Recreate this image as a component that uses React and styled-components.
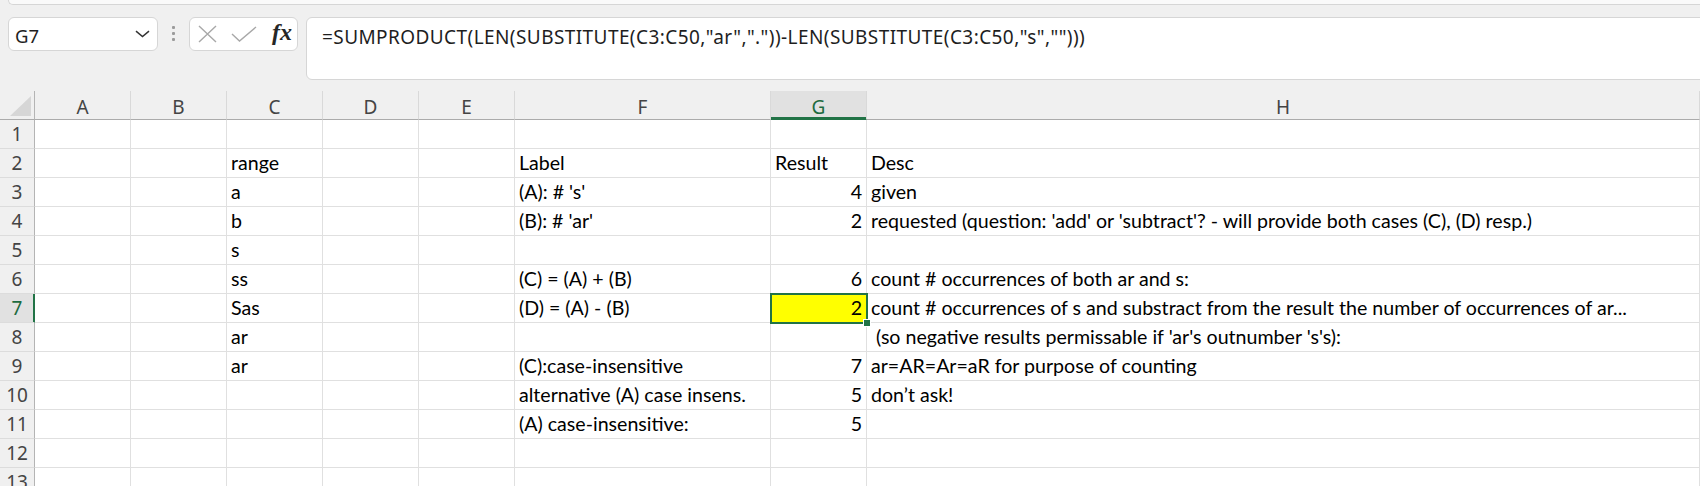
import React from 'react';
import styled, { createGlobalStyle, css } from 'styled-components';

const GlobalStyle = createGlobalStyle`
  html, body {
    margin: 0;
    padding: 0;
    background: #f0f0f0;
    overflow: hidden;
  }
`;

const Page = styled.div`
  width: 1700px;
  height: 486px;
  overflow: hidden;
  background: #f0f0f0;
`;

const TopStrip = styled.div`
  height: 4px;
  margin-left: 8px;
  background: #fafafa;
  border-left: 1px solid #d6d6d6;
  border-bottom: 1px solid #d6d6d6;
  border-bottom-left-radius: 6px;
`;

const FormulaRow = styled.div`
  display: flex;
  align-items: flex-start;
  height: 63px;
  padding: 12px 0 11px 8px;
  font-family: 'Noto Sans', 'Open Sans', sans-serif;
`;

const Box = styled.div`
  box-sizing: border-box;
  flex-shrink: 0;
  height: 34px;
  background: #fff;
  border: 1px solid #d6d6d6;
  border-radius: 6px;
  display: flex;
  align-items: center;
`;

const NameBox = styled(Box)`
  width: 150px;
  padding: 3px 7px 0 6px;
  justify-content: space-between;
  font-size: 18.5px;
  color: #1e1e1e;

  svg {
    margin-top: -3px;
  }
`;

const Dots = styled.div`
  display: flex;
  flex-direction: column;
  gap: 3px;
  margin: 9px 14px 0 14px;

  span {
    width: 3px;
    height: 3px;
    border-radius: 1px;
    background: #9b9b9b;
  }
`;

const FxBox = styled(Box)`
  width: 109px;
  padding: 0 5px 0 7px;
  gap: 0;

  svg + svg {
    margin-left: 13px;
  }
`;

const Fx = styled.span`
  margin-left: auto;
  margin-top: -3px;
  font-family: 'Liberation Serif', 'DejaVu Serif', serif;
  font-style: italic;
  font-weight: bold;
  font-size: 24px;
  color: #262626;
`;

const FormulaBar = styled.div`
  box-sizing: border-box;
  flex: 1;
  height: 63px;
  margin: 0 -12px 0 8px;
  padding: 7px 15px 0;
  background: #fff;
  border: 1px solid #d6d6d6;
  border-radius: 6px;
  font-size: 19px;
  letter-spacing: 0.42px;
  line-height: 24px;
  color: #1e1e1e;
  white-space: pre;
`;

const Grid = styled.div`
  display: grid;
  grid-template-columns: 35px 96px 96px 96px 96px 96px 256px 96px 833px;
  grid-auto-rows: 29px;
`;

const HeadBase = css`
  box-sizing: border-box;
  font-family: 'Noto Sans', 'Open Sans', sans-serif;
  font-size: 19px;
  text-align: center;
  color: ${(p) => (p.$active ? '#1d6b40' : '#444')};
  background: ${(p) => (p.$active ? '#e1e1e1' : '#f0f0f0')};
`;

const Corner = styled.div`
  box-sizing: border-box;
  background: #f0f0f0;
  border-right: 1px solid #b4b4b4;
  border-bottom: 1px solid #ababab;
  display: flex;
  align-items: flex-end;
  justify-content: flex-end;
  padding: 0 3px 3px 0;
`;

const ColHead = styled.div`
  ${HeadBase}
  line-height: 26px;
  padding-top: 3px;
  border-right: 1px solid #d9d9d9;
  border-bottom: 1px solid #ababab;
  ${(p) => p.$active && css`
    box-shadow: inset 0 -2px 0 #217346;
    border-bottom-color: #217346;
  `}
`;

const RowHead = styled.div`
  ${HeadBase}
  line-height: 27px;
  padding-top: 1px;
  border-right: 1px solid #b4b4b4;
  border-bottom: 1px solid #dcdcdc;
  ${(p) => p.$active && css`
    box-shadow: inset -1px 0 0 #217346;
    border-right-color: #217346;
  `}
`;

const Cell = styled.div`
  box-sizing: border-box;
  position: relative;
  padding: 0 4px;
  background: ${(p) => p.$fill || '#fff'};
  border-right: 1px solid #e0e0e0;
  border-bottom: 1px solid #e0e0e0;
  font-family: Lato, 'Open Sans', sans-serif;
  font-size: 19.6px;
  line-height: 28px;
  color: #000;
  white-space: pre;
  overflow: ${(p) => (p.$selected ? 'visible' : 'hidden')};
  text-align: ${(p) => p.$align || 'left'};
  ${(p) => p.$selected && css`
    z-index: 1;
    outline: 2px solid #217346;
    outline-offset: -1px;
  `}
`;

const FillHandle = styled.span`
  position: absolute;
  right: -5px;
  bottom: -5px;
  width: 6px;
  height: 6px;
  background: #217346;
  border: 1px solid #fff;
`;

const columns = ['A', 'B', 'C', 'D', 'E', 'F', 'G', 'H'];

const data = {
  2: { C: 'range', F: 'Label', G: 'Result', H: 'Desc' },
  3: { C: 'a', F: "(A): # 's'", G: 4, H: 'given' },
  4: {
    C: 'b',
    F: "(B): # 'ar'",
    G: 2,
    H: "requested (question: 'add' or 'subtract'? - will provide both cases (C), (D) resp.)",
  },
  5: { C: 's' },
  6: { C: 'ss', F: '(C) = (A) + (B)', G: 6, H: 'count # occurrences of both ar and s:' },
  7: {
    C: 'Sas',
    F: '(D) = (A) - (B)',
    G: 2,
    H: 'count # occurrences of s and substract from the result the number of occurrences of ar...',
  },
  8: { C: 'ar', H: " (so negative results permissable if 'ar's outnumber 's's):" },
  9: { C: 'ar', F: '(C):case-insensitive', G: 7, H: 'ar=AR=Ar=aR for purpose of counting' },
  10: { F: 'alternative (A) case insens.', G: 5, H: 'don\u2019t ask!' },
  11: { F: '(A) case-insensitive:', G: 5 },
};

const active = { col: 'G', row: 7 };

const Chevron = () => (
  <svg width="15" height="8" viewBox="0 0 15 8">
    <path d="M1 1.2 L7.5 6.6 L14 1.2" fill="none" stroke="#333" strokeWidth="1.5" />
  </svg>
);

const Cancel = () => (
  <svg width="21" height="18" viewBox="0 0 21 18">
    <path d="M2 1 L19 17 M19 1 L2 17" stroke="#a8a8a8" strokeWidth="1.4" />
  </svg>
);

const Enter = () => (
  <svg width="26" height="16" viewBox="0 0 26 16">
    <path d="M1 8 L8.5 15 L25 1" fill="none" stroke="#a8a8a8" strokeWidth="1.4" />
  </svg>
);

const CornerMark = () => (
  <svg width="21" height="20" viewBox="0 0 21 20">
    <polygon points="21,0 21,20 0,20" fill="#d6d6d6" />
  </svg>
);

function App() {
  const rows = Array.from({ length: 13 }, (_, i) => i + 1);

  return (
    <Page>
      <GlobalStyle />
      <TopStrip />
      <FormulaRow>
        <NameBox>
          <span>G7</span>
          <Chevron />
        </NameBox>
        <Dots>
          <span />
          <span />
          <span />
        </Dots>
        <FxBox>
          <Cancel />
          <Enter />
          <Fx>fx</Fx>
        </FxBox>
        <FormulaBar>
          =SUMPRODUCT(LEN(SUBSTITUTE(C3:C50,"ar","."))-LEN(SUBSTITUTE(C3:C50,"s","")))
        </FormulaBar>
      </FormulaRow>

      <Grid>
        <Corner>
          <CornerMark />
        </Corner>
        {columns.map((c) => (
          <ColHead key={c} $active={c === active.col}>
            {c}
          </ColHead>
        ))}

        {rows.map((r) => (
          <React.Fragment key={r}>
            <RowHead $active={r === active.row}>{r}</RowHead>
            {columns.map((c) => {
              const value = data[r] && data[r][c];
              const selected = r === active.row && c === active.col;
              return (
                <Cell
                  key={c}
                  $align={typeof value === 'number' ? 'right' : 'left'}
                  $fill={selected ? '#ffff00' : undefined}
                  $selected={selected}
                >
                  {value}
                  {selected && <FillHandle />}
                </Cell>
              );
            })}
          </React.Fragment>
        ))}
      </Grid>
    </Page>
  );
}

export default App;
